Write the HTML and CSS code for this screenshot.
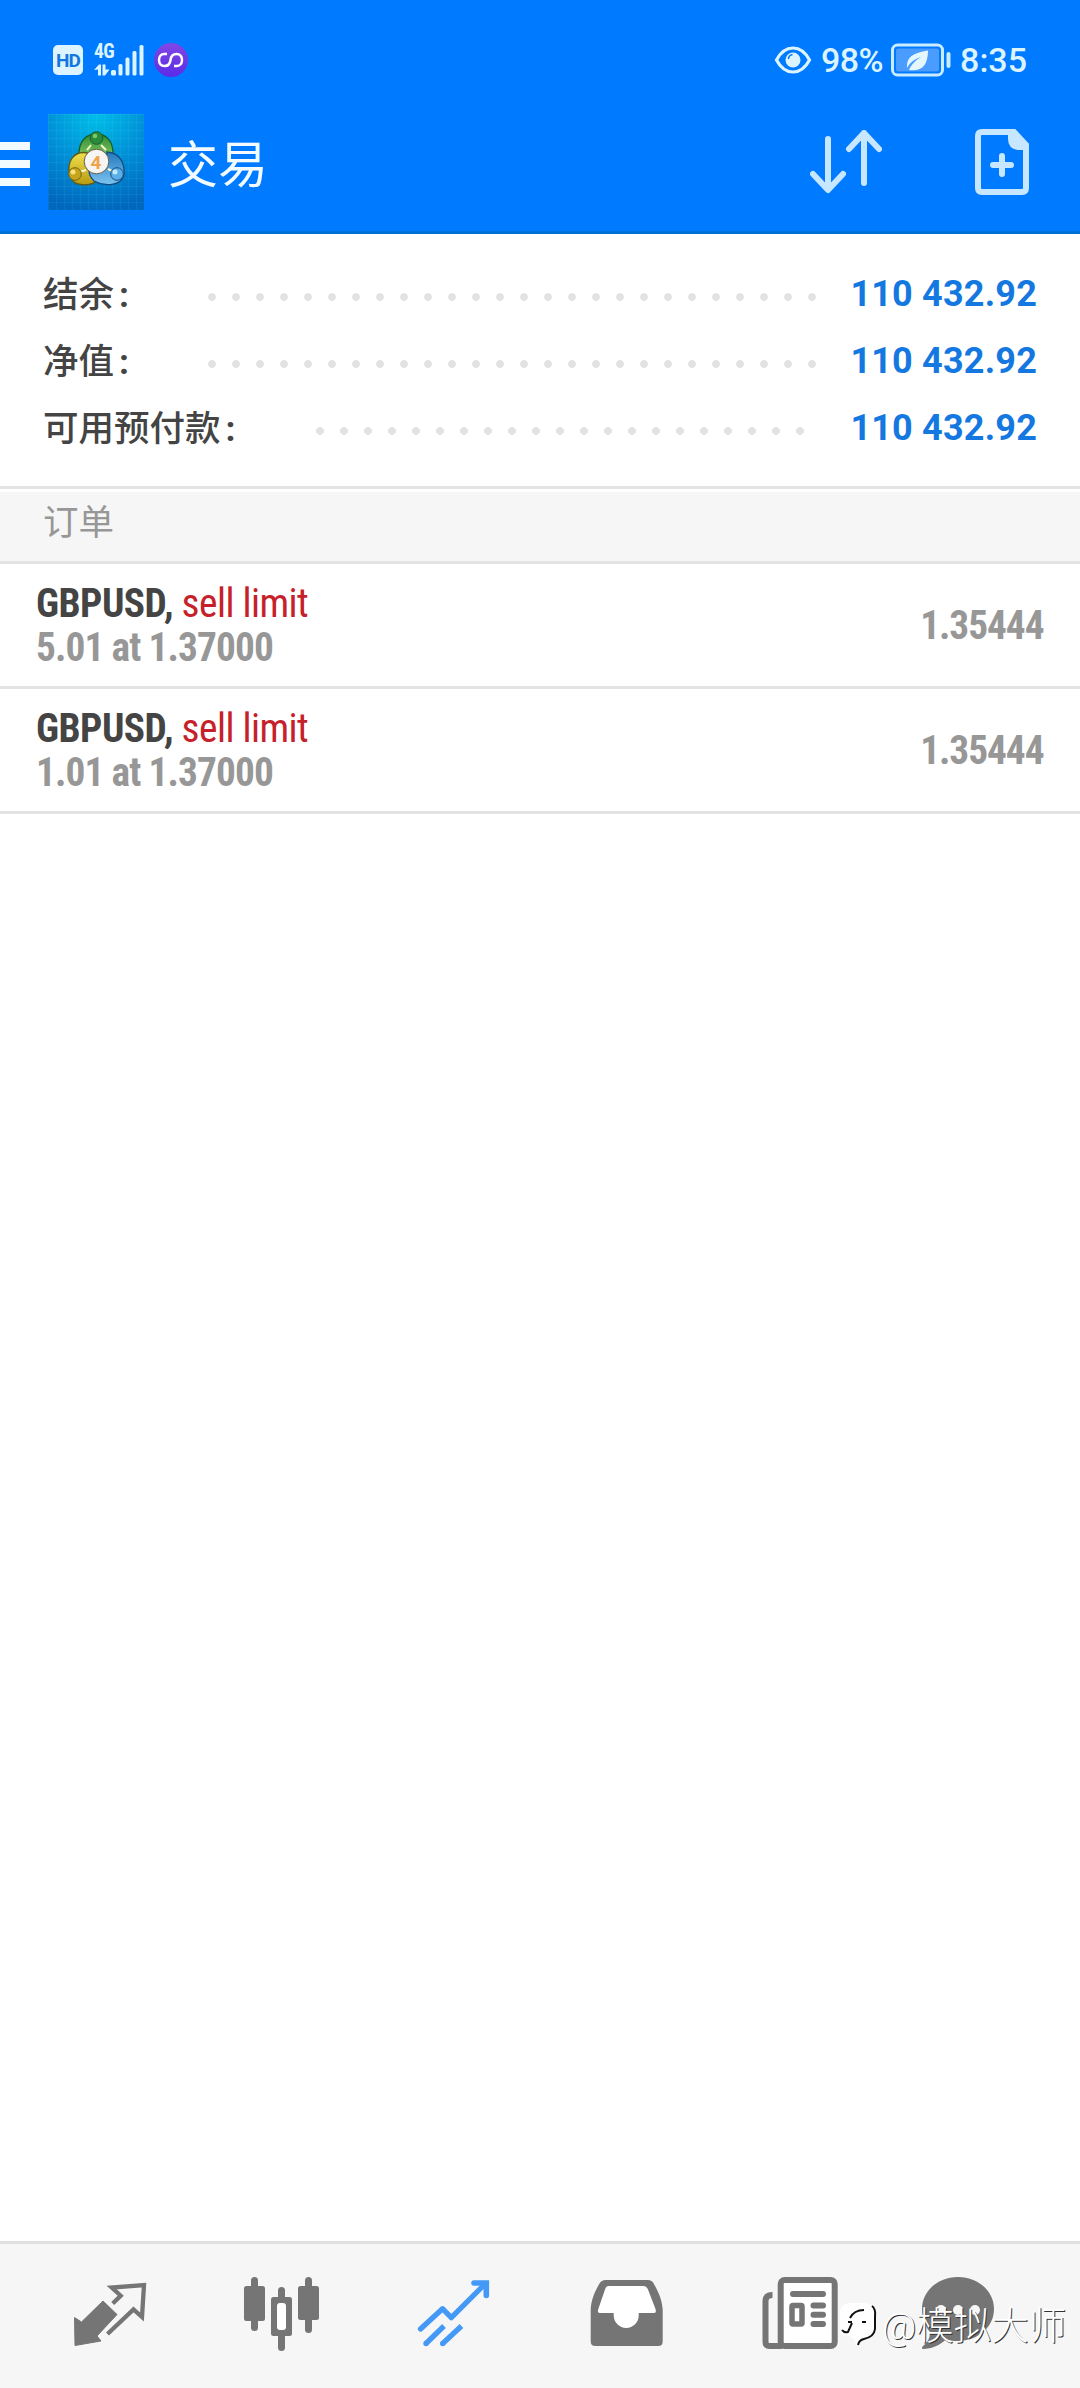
FILE: index.html
```
<!DOCTYPE html>
<html lang="zh-CN">
<head>
  <meta charset="UTF-8">
  <meta name="viewport" content="width=device-width, initial-scale=1.0">
  <title>交易</title>
  <link rel="stylesheet" href="styles.css">
</head>
<body>
  <header class="header">
    <div class="status-bar">
      <span class="hd">HD</span>
      <div class="signal">
        <span class="net">4G</span>
        <svg width="51" height="34" viewBox="0 0 51 34" fill="#dcf4ff">
          <path d="M0 27l5-5.500h2v11h-3v-6zM8.500 21.500h3v5h4l-4.500 6h-2.500z"/>
          <rect x="17" y="27" width="5" height="5.500" rx="1.500"/>
          <rect x="24.500" y="21" width="4" height="11.500" rx="1.500"/>
          <rect x="31.500" y="14.500" width="4" height="18" rx="1.500"/>
          <rect x="38.500" y="8" width="4" height="24.500" rx="1.500"/>
          <rect x="45.500" y="2" width="4" height="30.500" rx="1.500"/>
        </svg>
      </div>
      <svg class="app-dot" width="34" height="34" viewBox="154 43 34 34">
        <defs>
          <linearGradient id="violet" x1="0" y1="0" x2="0" y2="1">
            <stop offset="0" stop-color="#8247e5"/>
            <stop offset="1" stop-color="#5b2be6"/>
          </linearGradient>
        </defs>
        <circle cx="171" cy="60" r="17" fill="url(#violet)"/>
        <path d="M167 54H164C161 54 159 56.500 159 60S161 66 164.500 66C168 66 170 64 170.500 60S173 54 176.500 54C180 54 182 56.500 182 60S180 66 177 66H174" fill="none" stroke="#fff" stroke-width="2.500"/>
      </svg>
      <div class="status-right">
        <svg width="38" height="30" viewBox="0 0 38 30">
          <path d="M2.500 15C7 6.500 13 3 19 3S31 6.500 35.500 15C31 23.500 25 27 19 27S7 23.500 2.500 15z" fill="none" stroke="#dcf4ff" stroke-width="3.200"/>
          <circle cx="19" cy="15" r="7.500" fill="#dcf4ff"/>
          <path d="M14.500 14q0-3.500 4-4.500" fill="none" stroke="#007aff" stroke-width="1.500"/>
        </svg>
        <span class="percent">98%</span>
        <svg class="battery" width="60" height="34" viewBox="0 0 60 34">
          <rect x="1.500" y="2" width="50" height="30" rx="5" fill="none" stroke="#c9edff" stroke-width="3"/>
          <rect x="5" y="5.500" width="43" height="23" rx="2" fill="#4a9cff"/>
          <rect x="55.500" y="9" width="4" height="16" rx="2" fill="#c9edff"/>
          <path d="M37 7.500C22 10 15 14 16 25C19 19 24 16 30 14C25 17 20 22 18 27C31 29 37 22 37 7.500z" fill="#e6f8ff"/>
        </svg>
        <span class="clock">8:35</span>
      </div>
    </div>
    <div class="app-bar">
      <div class="menu"><i></i><i></i><i></i></div>
      <svg class="logo" width="96" height="96" viewBox="0 0 96 96">
        <defs>
          <radialGradient id="sky" cx=".5" cy="0" r="1">
            <stop offset="0" stop-color="#00bfe8"/>
            <stop offset=".5" stop-color="#0092d8"/>
            <stop offset="1" stop-color="#0068bd"/>
          </radialGradient>
          <linearGradient id="green" x1="0" y1="0" x2="0" y2="1">
            <stop offset="0" stop-color="#2e8b38"/>
            <stop offset="1" stop-color="#8ed060"/>
          </linearGradient>
          <linearGradient id="gold" x1="0" y1="0" x2="0" y2="1">
            <stop offset="0" stop-color="#f0e04c"/>
            <stop offset="1" stop-color="#b89a12"/>
          </linearGradient>
          <linearGradient id="blue" x1="0" y1="0" x2="0" y2="1">
            <stop offset="0" stop-color="#2478be"/>
            <stop offset="1" stop-color="#7cc4f0"/>
          </linearGradient>
          <pattern id="grid" width="8" height="8" patternUnits="userSpaceOnUse">
            <path d="M0 .5h8M.5 0v8" stroke="#7fe0ff" stroke-opacity=".08" fill="none"/>
          </pattern>
        </defs>
        <rect width="96" height="96" fill="url(#sky)"/>
        <rect width="96" height="96" fill="url(#grid)"/>
        <path d="M31 43C30 27 38 20 48.500 20S66 28 65 43L57 47H40z" fill="url(#green)" stroke="#17602c" stroke-width="1.300"/>
        <path d="M40 39C25 36 18 49 22 62C25 73 42 73 50 66L40 54z" fill="url(#gold)" stroke="#5c5b13" stroke-width="1.300"/>
        <path d="M59 38C72 39 77 49 76 61C73 72 57 73 46 67C41 62 41 59 41 55L58 50z" fill="url(#blue)" stroke="#114d83" stroke-width="1.300"/>
        <path d="M43 31l-4 5M53 31l5 5M31 58l7-2M66 58l-6-3" stroke="#f6f6cd" stroke-width="2"/>
        <circle cx="48.500" cy="24" r="6.300" fill="#2b8b3c" stroke="#17602c"/>
        <circle cx="27" cy="60" r="6.300" fill="#c7a51c" stroke="#726411"/>
        <circle cx="69" cy="60" r="6.300" fill="#5baee7" stroke="#114d83"/>
        <circle cx="47" cy="22" r="2.300" fill="#79c765"/>
        <circle cx="25" cy="58" r="2.500" fill="#f4e47b"/>
        <circle cx="67" cy="58" r="2.500" fill="#c1e8ff"/>
        <circle cx="48.500" cy="47.500" r="12.300" fill="#f6f5f2" stroke="#655c4c"/>
        <text x="48" y="54.500" class="logo-num">4</text>
      </svg>
      <h1 class="title">交易</h1>
      <div class="actions">
        <svg width="72" height="64" viewBox="810 130 72 64" fill="none" stroke="#c7e6ff" stroke-width="6" stroke-linecap="round" stroke-linejoin="round">
          <path d="M828 139v50M813 174l15 16 15-16"/>
          <path d="M864 183v-50M849 149l15-16 15 16"/>
        </svg>
        <svg class="new-order" width="54" height="66" viewBox="0 0 54 66">
          <path d="M3 7q0-4 4-4h32l12 13v43q0 4-4 4H7q-4 0-4-4z" fill="none" stroke="#c7e6ff" stroke-width="6"/>
          <path d="M33 3h7l13 13v5h-8q-12 0-12-11z" fill="#c7e6ff"/>
          <path d="M27 27v18M18 36h18" stroke="#c7e6ff" stroke-width="6" stroke-linecap="round"/>
        </svg>
      </div>
    </div>
  </header>

  <main class="content">
    <section class="summary">
      <div class="row"><span class="label">结余<span class="colon">:</span></span><i class="dots"></i><b class="value">110 432.92</b></div>
      <div class="row"><span class="label">净值<span class="colon">:</span></span><i class="dots"></i><b class="value">110 432.92</b></div>
      <div class="row"><span class="label">可用预付款<span class="colon">:</span></span><i class="dots dots-short"></i><b class="value">110 432.92</b></div>
    </section>
    <h2 class="section-title">订单</h2>
    <ul class="orders">
      <li class="order">
        <div class="info">
          <div class="name"><b>GBPUSD,</b> <span class="sell">sell limit</span></div>
          <div class="volume">5.01 at 1.37000</div>
        </div>
        <div class="price">1.35444</div>
      </li>
      <li class="order">
        <div class="info">
          <div class="name"><b>GBPUSD,</b> <span class="sell">sell limit</span></div>
          <div class="volume">1.01 at 1.37000</div>
        </div>
        <div class="price">1.35444</div>
      </li>
    </ul>
  </main>

  <nav class="tabs">
    <!-- quotes -->
    <svg class="tab" viewBox="0 0 172 144">
      <path d="M79 57L93 70.500 73 92l4 5-26 4.500-.500-28 7 4.500z" fill="#757575" stroke="#757575" stroke-width="1" stroke-linejoin="round"/>
      <path d="M88.700 59.500l8-7.800-9-8.200 32.300-2.500-2 32-8.500-7.500-26 24.500" fill="none" stroke="#757575" stroke-width="4.300"/>
    </svg>
    <!-- charts -->
    <svg class="tab" viewBox="0 0 172 144" fill="#757575">
      <rect x="48" y="42" width="21" height="35" rx="2.500"/>
      <rect x="55" y="33" width="7" height="54" rx="3.500"/>
      <rect x="82" y="43" width="7" height="64" rx="3.500"/>
      <rect x="75" y="53" width="21" height="39" rx="2.500"/>
      <rect x="81" y="59" width="9" height="27" rx="3" fill="#fff"/>
      <rect x="102" y="42" width="21" height="34" rx="2.500"/>
      <rect x="109" y="33" width="7" height="56" rx="3.500"/>
    </svg>
    <!-- trade -->
    <svg class="tab" viewBox="0 0 172 144" fill="none" stroke="#4499f7" stroke-width="5.300">
      <path d="M52.500 85l22-20.300 8.800 9L116 41" stroke-linecap="round" stroke-linejoin="round"/>
      <path d="M106 39h12.300v12.500" stroke-width="5.600" stroke-linecap="round"/>
      <path d="M110 39h9v9z" fill="#4499f7" stroke="none"/>
      <path d="M58 99.500l18-17.500M74.700 99.500L93.500 82"/>
      <circle cx="58" cy="99.500" r="2.700" fill="#4499f7" stroke="none"/>
      <circle cx="74.700" cy="99.500" r="2.700" fill="#4499f7" stroke="none"/>
    </svg>
    <!-- history -->
    <svg class="tab" viewBox="0 0 172 144">
      <path d="M50.700 66C51 56 55 47 59.500 39.500Q61.500 36 65.500 36H108Q112 36 113.700 39.500C118 47 122.300 56 122.700 66V97.500Q122.700 102 118 102H55.500Q50.700 102 50.700 97.500z" fill="#757575"/>
      <path d="M68.500 42H103.500Q106.500 42 108 45.500L115.500 65Q116.700 69 114 69H98.700V71.500A12.500 12.500 0 0 1 73.700 71.500V69H60Q57 69 58.300 65L65 45.500Q66 42 68.500 42z" fill="#fff"/>
    </svg>
    <!-- news -->
    <svg class="tab" viewBox="0 0 172 144" fill="none" stroke="#757575" stroke-width="6">
      <rect x="68.700" y="36" width="54" height="66" rx="4" fill="#fff"/>
      <path d="M60.500 51q-7 0-7 6v41q0 4 4 4H70"/>
      <path d="M81 50h30M101.500 61.500h9.500M101.500 70.700h9.500M101.500 80h9.500" stroke-linecap="round"/>
      <rect x="80" y="61.500" width="10" height="18.500" rx="1" fill="#fff" stroke-width="5.500"/>
    </svg>
    <!-- chat -->
    <svg class="tab" viewBox="0 0 172 144">
      <path d="M74 33C94 33 110 47 110 65S94 97 74 97C69 97 66 96.500 62 95.500C56 101 48 105 39 105C37.500 105 38 103 39 102C44 98 46 94 46 88C41 82 38 74 38 65C38 47 54 33 74 33z" fill="#757575"/>
      <g fill="#f6f6f6">
        <circle cx="57" cy="66" r="5"/>
        <circle cx="74" cy="66" r="5"/>
        <circle cx="91" cy="66" r="5"/>
      </g>
    </svg>
  </nav>

  <div class="watermark">
    <svg width="40" height="46" viewBox="0 0 40 46" fill="none">
      <path d="M10 0H28Q37 2 37 12V26Q35 35 26 37L19 43 17 37 10 32Q2 34 2 28V10Q2 2 10 0z" fill="#fff"/>
      <path d="M34 3Q38 6 37 14V26Q36 34 26 36Q21 37 20 42" stroke="#111" stroke-width="2"/>
      <path d="M4 27Q6 30 10 29L14 20M12 15Q16 7 26 7M10 19H14M24 19H28" stroke="#111" stroke-width="2"/>
    </svg>
    <span>@模拟大师</span>
  </div>
</body>
</html>
```
FILE: styles.css
```
* {
  box-sizing: border-box;
}
body {
  margin: 0;
  height: 2388px;
  display: flex;
  flex-direction: column;
  background: #fff;
  font-family: Roboto, "Noto Sans CJK SC", sans-serif;
  position: relative;
  overflow: hidden;
}
.header {
  height: 234px;
  padding-top: 40px;
  background: #007aff;
  border-bottom: 3px solid #006fd6;
  color: #dcf4ff;
}
.status-bar {
  height: 40px;
  display: flex;
  align-items: center;
  padding: 0 53px;
}
.hd {
  width: 30px;
  height: 30px;
  border-radius: 5px;
  background: #dcf4ff;
  color: #1477df;
  font-size: 19px;
  font-weight: 700;
  line-height: 31px;
  text-align: center;
  letter-spacing: -1px;
}
.signal {
  position: relative;
  width: 51px;
  height: 34px;
  margin-left: 11px;
}
.net {
  position: absolute;
  left: 0;
  top: -1px;
  font-size: 19.5px;
  font-weight: 700;
  font-stretch: 75%;
  line-height: 20px;
  letter-spacing: -0.5px;
}
.app-dot {
  margin-left: 9px;
}
.status-right {
  margin-left: auto;
  display: flex;
  align-items: center;
  font-size: 34px;
  font-weight: 500;
}
.percent {
  margin-left: 9px;
  width: 63px;
  letter-spacing: -0.6px;
}
.battery {
  margin-left: 7px;
}
.clock {
  margin-left: 9px;
}
.app-bar {
  height: 96px;
  margin-top: 34px;
  display: flex;
  align-items: center;
}
.menu {
  width: 30px;
  display: flex;
  flex-direction: column;
  gap: 10px;
  margin-top: 4px;
}
.menu i {
  height: 8px;
  background: #f2fbff;
}
.logo {
  margin-left: 18px;
}
.logo-num {
  font-size: 19px;
  font-weight: 700;
  fill: #f0a24c;
  text-anchor: middle;
}
.title {
  margin: 7px 0 0 24px;
  font-size: 50px;
  font-weight: 400;
  line-height: 96px;
  color: #f2fbff;
}
.actions {
  margin-left: auto;
  padding-right: 51px;
  display: flex;
  align-items: center;
}
.new-order {
  margin-left: 93px;
}
.summary {
  height: 255px;
  padding: 26px 43px 0;
  border-bottom: 3px solid #e3e3e3;
}
.row {
  height: 67px;
  display: flex;
  align-items: center;
}
.label {
  width: 165px;
  padding-bottom: 4px;
  font-size: 35.5px;
  font-weight: 500;
  white-space: nowrap;
  color: #444;
}
.colon {
  margin-left: 5px;
  font-weight: 700;
}
.dots {
  width: 608px;
  height: 8px;
  margin-top: 6px;
  background: radial-gradient(circle at 4px 4px, #e2e2e2 3.5px, transparent 4.2px) 0 0 / 24px 8px;
}
.dots-short {
  margin-left: 108px;
  width: 488px;
}
.value {
  margin-left: auto;
  font-size: 36px;
  font-weight: 700;
  letter-spacing: 0.2px;
  color: #1478e0;
}
.section-title {
  margin: 3px 0 0;
  height: 72px;
  padding-left: 43px;
  background: #f6f6f6;
  border-bottom: 3px solid #e3e3e3;
  font-size: 35.5px;
  font-weight: 400;
  line-height: 62px;
  color: #979797;
}
.orders {
  margin: 0;
  padding: 0;
  list-style: none;
}
.order {
  height: 125px;
  padding: 0 36px;
  border-bottom: 3px solid #e3e3e3;
  display: flex;
  align-items: center;
  justify-content: space-between;
  font-size: 41px;
  font-stretch: 75%;
  line-height: 44px;
}
.name, .volume {
  transform: scaleX(0.96);
  transform-origin: left;
  white-space: nowrap;
}
.name {
  letter-spacing: -0.55px;
}
.name b {
  color: #444;
}
.sell {
  color: #c6212a;
}
.volume, .price {
  font-weight: 700;
  color: #979797;
}
.volume {
  letter-spacing: -0.95px;
}
.price {
  letter-spacing: -1.1px;
  transform: scaleX(0.96);
  transform-origin: right;
}
.tabs {
  height: 147px;
  margin-top: auto;
  padding-left: 24px;
  display: flex;
  background: #f6f6f6;
  border-top: 3px solid #e0e0e0;
}
.tab {
  width: 172px;
  height: 144px;
}
.watermark {
  position: absolute;
  left: 838px;
  top: 2302px;
  display: flex;
  align-items: center;
  font-size: 37.5px;
  font-weight: 300;
  line-height: 48px;
  color: #fff;
  text-shadow: 1px 1px 0 #333;
  white-space: nowrap;
}
.watermark span {
  margin-left: 4px;
}
```
